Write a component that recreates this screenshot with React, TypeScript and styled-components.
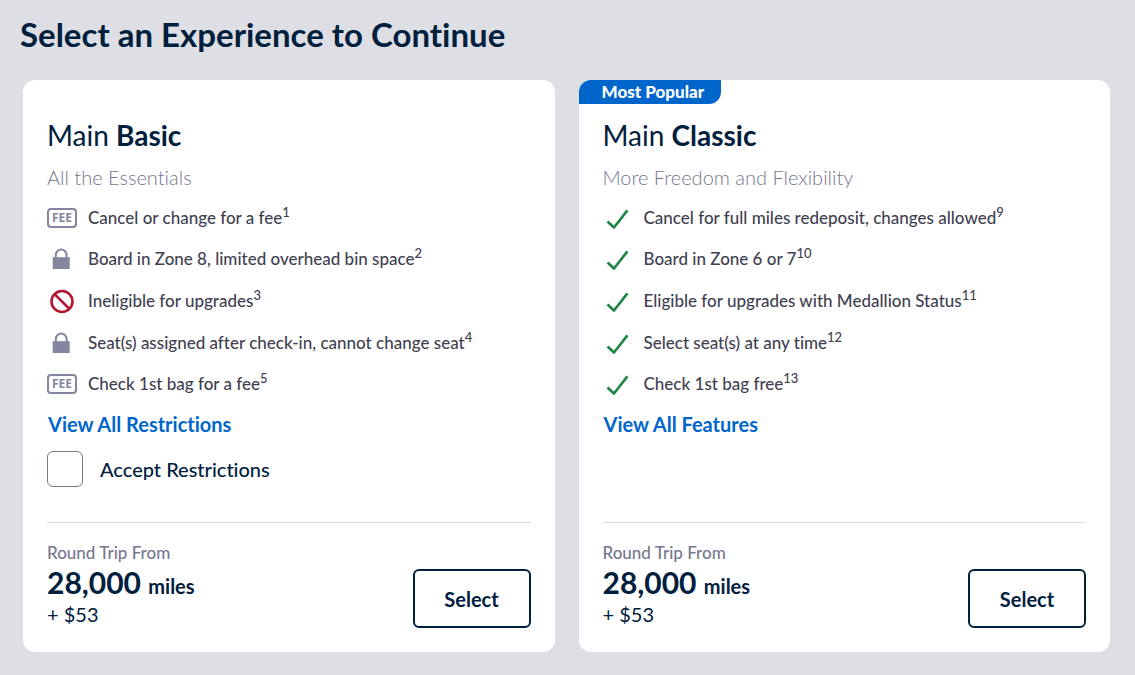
import React from "react";
import styled, { createGlobalStyle } from "styled-components";

const navy = "#00203d";
const slate = "#75778f";
const blue = "#0066cc";

const GlobalStyle = createGlobalStyle`
  * { box-sizing: border-box; }
  body {
    margin: 0;
    background: #dedfe5;
    color: ${navy};
    font-family: Lato, "Open Sans", sans-serif;
    font-variant-ligatures: none;
  }
`;

const Page = styled.main`
  padding: 14px 25px 23px 23px;
`;

const Title = styled.h1`
  margin: 0 0 26px -3px;
  font-size: 33px;
  line-height: 40px;
  font-weight: 700;
`;

const Cards = styled.div`
  display: grid;
  grid-template-columns: repeat(2, minmax(0, 1fr));
  gap: 24px;
`;

const Card = styled.article`
  position: relative;
  display: flex;
  flex-direction: column;
  padding: 35px 24px 24px;
  border-radius: 12px;
  background: #fff;
  overflow: hidden;
`;

const Ribbon = styled.span`
  position: absolute;
  top: 0;
  left: 0;
  padding: 0 17px 0 23px;
  border-bottom-right-radius: 12px;
  background: ${blue};
  color: #fff;
  font-size: 17px;
  line-height: 24px;
  font-weight: 900;
`;

const FareName = styled.h2`
  margin: 0;
  font-size: 28px;
  line-height: 40px;
  font-weight: 400;
`;

const Tagline = styled.p`
  margin: 10px 0 8px;
  color: ${slate};
  font-size: 20px;
  line-height: 24px;
  font-weight: 300;
`;

const FeatureList = styled.ul`
  display: grid;
  grid-auto-rows: 1fr;
  min-height: 208px;
  margin: 0;
  padding: 0;
  list-style: none;
`;

const Feature = styled.li`
  display: grid;
  grid-template-columns: 30px 1fr;
  align-items: center;
  gap: 11px;
  color: #3f4150;
  font-size: 17px;
  line-height: 24px;
  font-weight: 500;

  svg { display: block; }
`;

const Note = styled.sup`
  font-size: 13px;
  line-height: 0;
`;

const DetailsLink = styled.a`
  align-self: flex-start;
  margin: 7px 0 15px 1px;
  color: ${blue};
  font-size: 20px;
  line-height: 24px;
  font-weight: 700;
  text-decoration: none;
`;

const Accept = styled.label`
  display: flex;
  align-items: center;
  gap: 17px;
  margin-bottom: 35px;
  font-size: 20px;
  line-height: 24px;
  font-weight: 500;
`;

const Checkbox = styled.input`
  appearance: none;
  width: 36px;
  height: 36px;
  margin: 0;
  border: 1px solid ${slate};
  border-radius: 6px;
  background: #fff;

  &:checked { background: ${blue}; }
`;

const Footer = styled.footer`
  display: flex;
  justify-content: space-between;
  min-height: 106px;
  margin-top: auto;
  padding-top: 20px;
  border-top: 1px solid #dcdde3;
`;

const Price = styled.div`
  display: flex;
  flex-direction: column;
`;

const TripType = styled.span`
  color: ${slate};
  font-size: 17px;
  line-height: 20px;
  font-weight: 500;
`;

const Miles = styled.strong`
  font-size: 30px;
  line-height: 38px;
  font-weight: 700;
`;

const Unit = styled.span`
  font-size: 20px;
  line-height: 20px;
`;

const Tax = styled.span`
  font-size: 20px;
  line-height: 26px;
`;

const SelectButton = styled.button`
  align-self: flex-end;
  width: 118px;
  height: 59px;
  padding: 0;
  border: 2px solid ${navy};
  border-radius: 6px;
  background: #fff;
  color: ${navy};
  font: 700 20px/24px Lato, "Open Sans", sans-serif;
  cursor: pointer;
`;

const FeeText = styled.text`
  font: 700 12px "Noto Sans", sans-serif;
`;

type IconName = "fee" | "lock" | "ban" | "check";

function Icon({ name }: { name: IconName }) {
  return (
    <svg width="30" height="26" viewBox="0 0 30 26" fill="none" aria-hidden="true">
      {name === "fee" && (
        <>
          <rect x="1" y="4" width="28" height="18" rx="3" stroke="#8486a0" strokeWidth="2" />
          <FeeText x="15" y="17" textAnchor="middle" fill="#8486a0">FEE</FeeText>
        </>
      )}
      {name === "lock" && (
        <>
          <path d="M5.7 11.2h17V23h-17z" fill="#8486a0" />
          <path d="M8.8 12V9a5.4 5.4 0 0 1 10.8 0v3" stroke="#8486a0" strokeWidth="2" />
        </>
      )}
      {name === "ban" && (
        <g stroke="#b5152f" strokeWidth="2.6">
          <circle cx="15" cy="13.5" r="10.5" />
          <path d="m7.6 6.1 14.8 14.8" />
        </g>
      )}
      {name === "check" && (
        <path d="m4.5 16.5 6.5 6L24.4 5.4" stroke="#1f8446" strokeWidth="2.6" strokeLinejoin="round" />
      )}
    </svg>
  );
}

interface Fare {
  name: string;
  tagline: string;
  ribbon?: string;
  features: [IconName, string, string][];
  link: string;
  accept?: string;
}

const fares: Fare[] = [
  {
    name: "Basic",
    tagline: "All the Essentials",
    features: [
      ["fee", "Cancel or change for a fee", "1"],
      ["lock", "Board in Zone 8, limited overhead bin space", "2"],
      ["ban", "Ineligible for upgrades", "3"],
      ["lock", "Seat(s) assigned after check-in, cannot change seat", "4"],
      ["fee", "Check 1st bag for a fee", "5"],
    ],
    link: "View All Restrictions",
    accept: "Accept Restrictions",
  },
  {
    name: "Classic",
    tagline: "More Freedom and Flexibility",
    ribbon: "Most Popular",
    features: [
      ["check", "Cancel for full miles redeposit, changes allowed", "9"],
      ["check", "Board in Zone 6 or 7", "10"],
      ["check", "Eligible for upgrades with Medallion Status", "11"],
      ["check", "Select seat(s) at any time", "12"],
      ["check", "Check 1st bag free", "13"],
    ],
    link: "View All Features",
  },
];

function FareCard({ fare }: { fare: Fare }) {
  return (
    <Card>
      {fare.ribbon && <Ribbon>{fare.ribbon}</Ribbon>}
      <FareName>Main <b>{fare.name}</b></FareName>
      <Tagline>{fare.tagline}</Tagline>
      <FeatureList>
        {fare.features.map(([icon, text, note]) => (
          <Feature key={text}>
            <Icon name={icon} />
            <span>{text}<Note>{note}</Note></span>
          </Feature>
        ))}
      </FeatureList>
      <DetailsLink href="#details">{fare.link}</DetailsLink>
      {fare.accept && (
        <Accept>
          <Checkbox type="checkbox" />
          {fare.accept}
        </Accept>
      )}
      <Footer>
        <Price>
          <TripType>Round Trip From</TripType>
          <Miles>28,000 <Unit>miles</Unit></Miles>
          <Tax>+ $53</Tax>
        </Price>
        <SelectButton type="button">Select</SelectButton>
      </Footer>
    </Card>
  );
}

export default function App() {
  return (
    <>
      <GlobalStyle />
      <Page>
        <Title>Select an Experience to Continue</Title>
        <Cards>
          {fares.map((fare) => <FareCard key={fare.name} fare={fare} />)}
        </Cards>
      </Page>
    </>
  );
}
